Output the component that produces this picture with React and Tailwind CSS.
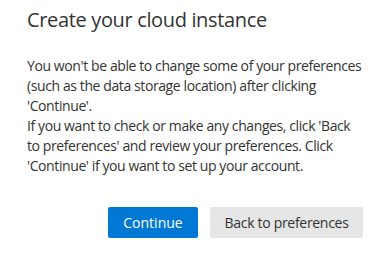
export default function App() {
  return (
    <div
      className="w-[386px] h-[258px] bg-white text-[#333333] pl-[27px] pr-[23px] pt-[6px]"
      style={{ fontFamily: '"Segoe UI", "Open Sans", sans-serif' }}
    >
      <h1 className="text-[20px] leading-[28px] font-normal tracking-[-0.35px]">Create your cloud instance</h1>
      <div className="mt-[22px] text-[14px] leading-[20px] tracking-[-0.4px] whitespace-nowrap">
        <p>
          You won't be able to change some of your preferences
          <br />
          (such as the data storage location) after clicking
          <br />
          'Continue'.
        </p>
        <p>
          If you want to check or make any changes, click 'Back
          <br />
          to preferences' and review your preferences. Click
          <br />
          'Continue' if you want to set up your account.
        </p>
      </div>
      <div className="flex justify-end gap-[12px] mt-[31px]">
        <button className="w-[90px] h-[31px] rounded-[2px] bg-[#0078d4] text-white text-[14px]">Continue</button>
        <button className="w-[153px] h-[31px] rounded-[2px] bg-[#e6e6e6] text-[#333333] text-[14px] tracking-[-0.3px]">Back to preferences</button>
      </div>
    </div>
  )
}
